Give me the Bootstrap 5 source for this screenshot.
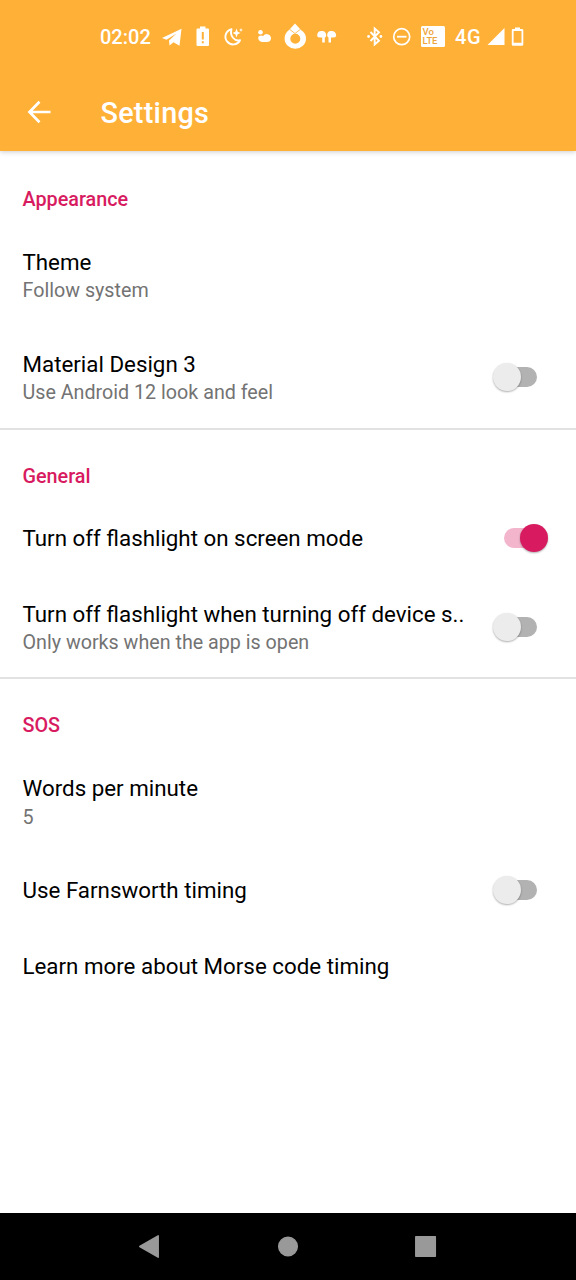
<!DOCTYPE html>
<html lang="en">
<head>
<meta charset="utf-8">
<meta name="viewport" content="width=device-width, initial-scale=1">
<title>Settings</title>
<link href="https://cdn.jsdelivr.net/npm/bootstrap@5.3.0/dist/css/bootstrap.min.css" rel="stylesheet">
<style>
  body { font-family: Roboto, "Noto Sans", sans-serif; color: #000; background: #fff; }
  .screen { height: 1280px; width: 576px; }
  .app-header { background: #ffb037; height: 151px; box-shadow: 0 1px 5px rgba(0,0,0,.2); }
  .status-bar { height: 72px; padding-left: 100px; }
  .status-bar svg { display: block; flex: none; }
  .clock { font-size: 20px; font-weight: 500; width: 58px; line-height: 72px; padding-top: 1px; }
  .network { font-size: 20px; font-weight: 500; letter-spacing: .6px; width: 31px; line-height: 72px; padding-top: 1px; }
  .toolbar { height: 79px; padding-left: 26px; }
  .toolbar h1 { font-size: 28.8px; font-weight: 500; line-height: 34px; letter-spacing: .25px; margin: 3px 0 0 48.5px; }
  .category { height: 72px; padding: 37px 22.5px 0; font-size: 19.8px; line-height: 24px; font-weight: 500; color: #d81b60; }
  .pref { padding: 0 24px 0 22.5px; height: 75.5px; }
  .pref.two-line { height: 102.3px; }
  .pref-title { font-size: 22.33px; line-height: 28px; white-space: nowrap; padding-top: 2px; }
  .pref-summary { font-size: 19.7px; line-height: 28px; color: #737373; padding-top: 1.5px; }
  .two-line .pref-title { padding-top: 4.5px; }
  .group + .group { border-top: 2px solid #e2e2e2; }
  .group + .group .category { height: 70px; padding-top: 35px; }
  .toggle { position: relative; width: 60px; height: 30px; flex: none; }
  .toggle::before { content: ""; position: absolute; left: 11px; top: 5.500px; width: 34px; height: 20px; border-radius: 10px; background: #b2b2b2; }
  .toggle::after { content: ""; position: absolute; left: 1px; top: 1.500px; width: 28px; height: 28px; border-radius: 50%; background: #ececec; box-shadow: 0 1px 2px rgba(0,0,0,.32); }
  .toggle.on::before { background: #f3b5cc; left: 12px; }
  .toggle.on::after { background: #d81b60; left: 28px; }
  .nav-keys { height: 67px; background: #000; }
</style>
</head>
<body>
<div class="screen d-flex flex-column overflow-hidden">
  <header class="app-header text-white flex-shrink-0">
    <div class="status-bar d-flex">
      <div class="clock">02:02</div>
      <svg width="208" height="72" viewBox="158 0 208 72" fill="#fff">
        <path d="M162 38 181.500 28.800 179.500 45.800 173.500 42.200 169.500 45.500 169 40.500 176.500 33.500 166.500 39.800Z"/>
        <path fill-rule="evenodd" d="M200 28.500V26.500H205.500V28.500H208Q209 28.500 209 29.500V45Q209 46 208 46H197.500Q196.500 46 196.500 45V29.500Q196.500 28.500 197.500 28.500ZM201.800 32V39.500H203.800V32ZM201.800 41.200V43.200H203.800V41.200Z"/>
        <path d="M231.500 29.200A7.700 7.700 0 1 0 240 40.200C234.500 41.500 229.500 36 231.500 29.200Z" fill="none" stroke="#fff" stroke-width="1.900" stroke-linejoin="round"/>
        <path d="M236.500 28.500 237.700 31.800 240.500 33 237.700 34.200 236.500 37.500 235.300 34.200 232.500 33 235.300 31.800ZM241 28 241.600 29.500 243 30 241.600 30.600 241 32 240.400 30.600 239 30 240.400 29.500Z"/>
        <circle cx="260.500" cy="32.300" r="2.300"/>
        <path d="M262.500 42A4 4 0 0 1 258.500 36.500Q261 34.800 263.200 36A4.300 4.300 0 0 1 271 37.500Q271.300 42 266.500 42Z"/>
        <path fill-rule="evenodd" d="M295 23.500 301 30Q306 33 306 38.500A10.700 10.300 0 0 1 284.600 38.500Q284.600 33 289 30ZM295.300 33.700A5 5 0 1 0 295.300 43.700A5 5 0 0 0 295.300 33.700Z"/>
        <path d="M289.500 29.200 295 33.500 300.500 29.200" fill="none" stroke="#ffb037" stroke-width=".8"/>
        <path d="M317.200 36Q317 31 321.500 31Q326 30.500 326.200 35.500Q326 37.500 324.800 37.500V42.500H322.200V37.500Q317.500 38 317.200 36ZM336.200 36Q336 31 331.500 31Q327.200 30.500 327.200 35.500Q327.500 37.500 328.500 37.500V42.500H331V37.500Q335.800 38 336.200 36Z"/>
      </svg>
      <svg width="89" height="72" viewBox="366 0 89 72" fill="#fff">
        <path d="M370.500 32 379 40.800 374.700 44.500V28.500L379 32.200 370.500 41" fill="none" stroke="#fff" stroke-width="1.900"/>
        <circle cx="368.600" cy="36.500" r="1.400"/><circle cx="380.900" cy="36.500" r="1.400"/>
        <circle cx="401.700" cy="36.700" r="8" fill="none" stroke="#fff" stroke-width="1.700"/>
        <path d="M397 35.800H406.500V37.600H397Z"/>
        <rect x="421" y="26" width="24" height="21" rx="1.500"/>
        <text x="422.500" y="35" font-family="Roboto, sans-serif" font-size="9.500" font-weight="500" fill="#eda33a">Vo</text>
        <text x="422.500" y="44.300" font-family="Roboto, sans-serif" font-size="9.300" font-weight="500" fill="#eda33a">LTE</text>
      </svg>
      <div class="network">4G</div>
      <svg width="44" height="72" viewBox="486 0 44 72" fill="#fff">
        <path d="M487.500 45 504.500 28V45Z"/>
        <path fill-rule="evenodd" d="M515 29V27.500H520V29H522Q523.300 29 523.300 30.300V44.500Q523.300 45.700 522 45.700H513Q511.800 45.700 511.800 44.500V30.300Q511.800 29 513 29ZM513.600 31V42.800H521.500V31Z"/>
      </svg>
    </div>
    <div class="toolbar d-flex align-items-center">
      <svg width="26" height="26" viewBox="0 0 26 26" fill="none" stroke="#fff" stroke-width="2.700"><path d="M24.500 13H4M13.500 2.800 3.500 13 13.500 23.200"/></svg>
      <h1>Settings</h1>
    </div>
  </header>
  <main class="flex-grow-1">
    <section class="group">
      <div class="category">Appearance</div>
      <div class="pref two-line d-flex align-items-center"><div><div class="pref-title">Theme</div><div class="pref-summary">Follow system</div></div></div>
      <div class="pref two-line d-flex align-items-center justify-content-between"><div><div class="pref-title">Material Design 3</div><div class="pref-summary">Use Android 12 look and feel</div></div><div class="toggle"></div></div>
    </section>
    <section class="group">
      <div class="category">General</div>
      <div class="pref d-flex align-items-center justify-content-between"><div class="pref-title">Turn off flashlight on screen mode</div><div class="toggle on"></div></div>
      <div class="pref two-line d-flex align-items-center justify-content-between"><div><div class="pref-title">Turn off flashlight when turning off device s..</div><div class="pref-summary">Only works when the app is open</div></div><div class="toggle"></div></div>
    </section>
    <section class="group">
      <div class="category">SOS</div>
      <div class="pref two-line d-flex align-items-center"><div><div class="pref-title">Words per minute</div><div class="pref-summary">5</div></div></div>
      <div class="pref d-flex align-items-center justify-content-between"><div class="pref-title">Use Farnsworth timing</div><div class="toggle"></div></div>
      <div class="pref d-flex align-items-center"><div class="pref-title">Learn more about Morse code timing</div></div>
    </section>
  </main>
  <footer class="nav-keys flex-shrink-0">
    <svg class="d-block" width="576" height="67" viewBox="0 1213 576 67" fill="#999" stroke="#999" stroke-width="1.500" stroke-linejoin="round">
      <path d="M139.800 1246.500 158.200 1235.800V1257.200Z"/>
      <circle cx="288" cy="1246.500" r="9.300"/>
      <rect x="415.800" y="1236.800" width="19.500" height="19.500"/>
    </svg>
  </footer>
</div>
<script src="https://cdn.jsdelivr.net/npm/bootstrap@5.3.0/dist/js/bootstrap.bundle.min.js"></script>
</body>
</html>
